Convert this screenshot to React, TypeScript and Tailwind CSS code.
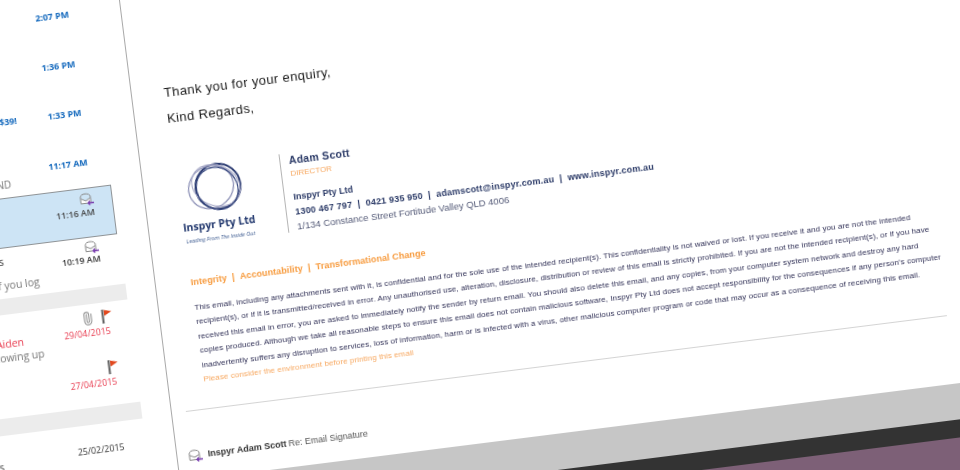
import { Paperclip } from 'lucide-react'

const disclaimer = [
  'This email, including any attachments sent with it, is confidential and for the sole use of the intended recipient(s). This confidentiality is not waived or lost. If you receive it and you are not the intended',
  'recipient(s), or if it is transmitted/received in error. Any unauthorised use, alteration, disclosure, distribution or review of this email is strictly prohibited. If you are not the intended recipient(s), or if you have',
  'received this email in error, you are asked to immediately notify the sender by return email. You should also delete this email, and any copies, from your computer system network and destroy any hard',
  "copies produced. Although we take all reasonable steps to ensure this email does not contain malicious software, Inspyr Pty Ltd does not accept responsibility for the consequences if any person's computer",
  'inadvertently suffers any disruption to services, loss of information, harm or is infected with a virus, other malicious computer program or code that may occur as a consequence of receiving this email.',
]

function ReadIcon() {
  return (
    <svg width="15" height="13" viewBox="0 0 15 13" fill="none">
      <path d="M1 5.5 L1 4 C1 2 3.5 1 6 1 C8.5 1 11 2 11 4 L11 5.5" stroke="#8a8a8a" strokeWidth="1" />
      <path d="M1 5.5 L6 8 L11 5.5 L11 10.5 L1 10.5 Z" fill="#fff" stroke="#8a8a8a" strokeWidth="1" />
      <path d="M8 10.5 H14 M10 8.5 L8 10.5 L10 12.5" stroke="#7a3fb0" strokeWidth="1.3" />
    </svg>
  )
}

function Flag() {
  return (
    <svg width="11" height="14" viewBox="0 0 11 14">
      <rect x="0.5" y="0" width="2" height="14" fill="#5f5f5f" />
      <path d="M3 0.5 L10.5 2.5 L3 6.5 Z" fill="#e2491f" />
    </svg>
  )
}

function Logo() {
  return (
    <svg width="58" height="54" viewBox="0 0 58 54" fill="none">
      <circle cx="32" cy="27" r="22.5" stroke="#28386f" strokeWidth="2" />
      <ellipse cx="25" cy="27" rx="23" ry="21" stroke="#8f93b8" strokeWidth="1.3" transform="rotate(-25 25 27)" />
      <ellipse cx="30" cy="26" rx="25" ry="20" stroke="#a9abc8" strokeWidth="1.1" transform="rotate(30 30 26)" />
      <ellipse cx="31" cy="29" rx="22" ry="20" stroke="#3a4a80" strokeWidth="1.3" transform="rotate(55 31 29)" />
    </svg>
  )
}

function Sidebar() {
  return (
    <div className="w-[178.5px] shrink-0 border-r border-[#a8a8a8] pt-[18.9px] font-['Open_Sans',sans-serif] text-[8.8px] leading-[13px]">
      {[['', '2:07 PM'], ['', '1:36 PM'], ['$39!', '1:33 PM']].map(([left, time]) => (
        <div key={time} className="flex h-[49.6px] items-center justify-between pr-[51px] text-[#1268bd]">
          <span className="w-[61.5px] text-right font-bold">{left}</span>
          <span className="font-bold">{time}</span>
        </div>
      ))}
      <div className="flex h-[49.6px] items-center justify-between pr-[51px]">
        <span className="mt-[25px] w-[48px] text-right text-[10px] text-[#777]">END</span>
        <span className="font-bold text-[#1268bd]">11:17 AM</span>
      </div>

      <div className="mr-[31px] flex h-[50px] flex-col items-end border border-[#8f9396] bg-[#cde4f5] pr-[18px] pt-[4px]">
        <span className="mr-[-1px]"><ReadIcon /></span>
        <span className="mt-[1px] font-semibold text-[#444]">11:16 AM</span>
      </div>

      <div className="h-[50px] pr-[50px]">
        <div className="flex justify-end pt-[3px]"><ReadIcon /></div>
        <div className="flex justify-between text-[#333]">
          <span className="-mt-[9px] w-[31px] text-right text-[10.5px]">s</span>
          <span className="font-semibold">10:19 AM</span>
        </div>
        <div className="mt-[2px] w-[64px] text-right text-[10.5px] text-[#777]">if you log</div>
      </div>

      <div className="mr-[29px] h-[16px] bg-[#ececec]" />

      <div className="h-[103px] pr-[49px]">
        <div className="-mr-[3px] flex items-center justify-end gap-[7px] pt-[7px]">
          <Paperclip className="h-[14px] w-[14px] -rotate-45 text-[#9a9a9a]" />
          <Flag />
        </div>
        <div className="mt-[2px] flex justify-between font-medium text-[#e8394d]">
          <span className="w-[41px] text-right text-[10.5px]">Aiden</span>
          <span>29/04/2015</span>
        </div>
        <div className="mt-[1px] w-[58px] whitespace-nowrap text-right text-[10.5px] text-[#777]">following up</div>
        <div className="-mr-[3px] mt-[7px] flex justify-end pt-[1px]"><Flag /></div>
        <div className="mt-[2px] text-right font-medium text-[#e8394d]">27/04/2015</div>
      </div>

      <div className="mr-[29px] h-[16.5px] bg-[#ececec]" />

      <div className="flex justify-between pr-[50px] pt-[20px] text-[#333]">
        <span className="mt-[5px] w-[6px] text-right text-[10.5px]">s</span>
        <span className="font-medium">25/02/2015</span>
      </div>
    </div>
  )
}

function Signature() {
  return (
    <div className="flex h-[88px] items-start">
      <div className="flex w-[77px] flex-col items-center">
        <Logo />
        <div className="mt-[3px] font-['Open_Sans',sans-serif] text-[10.5px] font-bold leading-[14px] text-[#22386e]">Inspyr Pty Ltd</div>
        <div className="mt-[3px] whitespace-nowrap font-['Open_Sans',sans-serif] text-[5.5px] italic leading-[8px] text-[#3c5a90]">Leading From The Inside Out</div>
      </div>
      <div className="ml-[28.5px] mt-[3px] h-[79px] w-[1px] bg-[#b4b4b4]" />
      <div className="ml-[9px] pt-[2.5px] font-['Liberation_Sans',sans-serif] text-[9px] leading-[15px] text-[#2b3a67]">
        <div className="text-[10.5px] font-bold leading-[14px] tracking-[0.3px]">Adam Scott</div>
        <div className="mt-[1px] text-[8px] leading-[12px] text-[#f7a860]">DIRECTOR</div>
        <div className="mt-[10px] font-bold">Inspyr Pty Ltd</div>
        <div className="font-bold tracking-[0.2px]">1300 467 797&nbsp; | &nbsp;0421 935 950&nbsp; | &nbsp;adamscott@inspyr.com.au&nbsp; | &nbsp;www.inspyr.com.au</div>
        <div className="-mt-[1px] text-[9.5px] text-[#555b78]">1/134 Constance Street Fortitude Valley QLD 4006</div>
      </div>
    </div>
  )
}

function EmailPane() {
  return (
    <div className="flex flex-1 flex-col font-['Liberation_Sans',sans-serif]">
      <div className="pl-[32.5px] pt-[119.8px] text-[13px] leading-[26.5px] tracking-[0.4px] text-[#1a1a1a]">
        <div>Thank you for your enquiry,</div>
        <div>Kind Regards,</div>
      </div>
      <div className="mt-[32.5px] pl-[32.5px]">
        <Signature />
      </div>
      <div className="mt-[22.6px] pl-[35.5px] text-[9px] font-bold leading-[16px] tracking-[0.1px] text-[#f79a3c]">
        Integrity&nbsp; | &nbsp;Accountability&nbsp; | &nbsp;Transformational Change
      </div>
      <div className="mt-[11.2px] whitespace-nowrap pl-[36px] text-[8px] leading-[14.4px] tracking-[0.1px] text-[#2f2f55]">
        {disclaimer.map(line => (
          <div key={line}>{line}</div>
        ))}
        <div className="text-[#f7a860]">Please consider the environment before printing this email</div>
      </div>
      <div className="ml-[14.5px] mt-[21.8px] h-[1px] w-[767px] bg-[#d4d4d4]" />
      <div className="mt-[34.4px] flex h-[20px] items-center gap-[5px] pl-[11px] text-[9px] text-[#555]">
        <ReadIcon />
        <span className="font-bold text-[#333]">Inspyr Adam Scott</span>
        <span className="-ml-[3px]">Re: Email Signature</span>
      </div>
      <div className="mt-[13px] h-[36px] shrink-0 bg-[#c6c6c6]" />
      <div className="h-[18px] shrink-0 bg-[#333333]" />
      <div className="flex-1 bg-[#7d6077]" />
    </div>
  )
}

export default function App() {
  return (
    <div className="h-[470px] w-[960px] overflow-hidden bg-white">
      <div className="flex h-[680px] w-[1060px] origin-top-left bg-white blur-[0.3px] [transform:rotate(-7.18deg)_translate(-60px,-20px)]">
        <Sidebar />
        <EmailPane />
      </div>
    </div>
  )
}
